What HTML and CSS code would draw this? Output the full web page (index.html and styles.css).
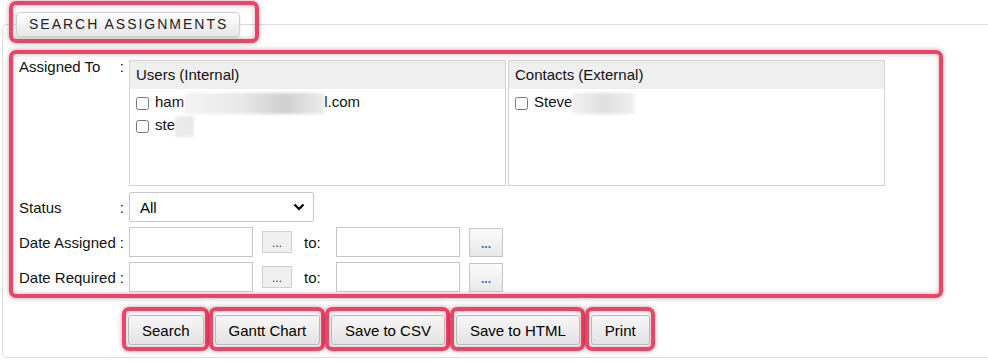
FILE: index.html
```html
<!DOCTYPE html>
<html>
<head>
  <meta charset="UTF-8">
  <title>Search Assignments</title>
  <link rel="stylesheet" href="styles.css">
</head>
<body>
  <div class="panel">
    <div class="mark legend-mark">
      <div class="legend">Search Assignments</div>
    </div>

    <div class="mark form">
      <div class="label top">Assigned To <span>:</span></div>
      <div class="lists">
        <div class="list">
          <div class="list-head">Users (Internal)</div>
          <div class="items">
            <label class="item"><input type="checkbox"><span>ham<span class="blur long"></span>l.com</span></label>
            <label class="item"><input type="checkbox"><span>ste<span class="blur short"></span></span></label>
          </div>
        </div>
        <div class="list">
          <div class="list-head">Contacts (External)</div>
          <div class="items">
            <label class="item"><input type="checkbox"><span>Steve<span class="blur mid"></span></span></label>
          </div>
        </div>
      </div>

      <div class="label">Status <span>:</span></div>
      <div class="select-wrap">
        <select>
          <option>All</option>
          <option>Open</option>
          <option>Closed</option>
        </select>
        <svg class="chevron" width="12" height="8" viewBox="0 0 12 8"><path d="M1.5 1.5 L6 6 L10.5 1.5" fill="none" stroke="#000" stroke-width="2.2"/></svg>
      </div>

      <div class="label">Date Assigned <span>:</span></div>
      <div class="dates">
        <input class="date" type="text">
        <button class="pick">...</button>
        <span class="to">to:</span>
        <input class="date second" type="text">
        <button class="pick alt">...</button>
      </div>

      <div class="label">Date Required <span>:</span></div>
      <div class="dates">
        <input class="date" type="text">
        <button class="pick">...</button>
        <span class="to">to:</span>
        <input class="date second" type="text">
        <button class="pick alt">...</button>
      </div>
    </div>

    <div class="actions">
      <div class="mark act"><button class="btn">Search</button></div>
      <div class="mark act"><button class="btn">Gantt Chart</button></div>
      <div class="mark act"><button class="btn">Save to CSV</button></div>
      <div class="mark act"><button class="btn">Save to HTML</button></div>
      <div class="mark act"><button class="btn">Print</button></div>
    </div>
  </div>
</body>
</html>
```

FILE: styles.css
```css
body {
  margin: 0;
  font-family: "Liberation Sans", Arial, sans-serif;
  font-size: 15px;
  color: #111;
  background-color: #fff;
  overflow: hidden;
}
.panel {
  margin: 24px -20px 0 2px;
  border: 1px solid #dcdcdc;
  border-radius: 5px;
  padding: 0 0 6px 6px;
}
/* red highlight boxes */
.mark {
  border: 4px solid #ee4266;
  border-radius: 7px;
  box-shadow: 0 0 5px rgba(0,0,0,0.35), inset 0 0 5px rgba(0,0,0,0.3);
}
.legend-mark {
  width: fit-content;
  margin-top: -24px;
  padding: 7px 15px 2px 3px;
}
.legend {
  height: 25px;
  box-sizing: border-box;
  border: 1px solid #cfcfcf;
  border-radius: 4px;
  background: linear-gradient(#ffffff, #e6e6e6);
  box-shadow: 0 1px 2px rgba(0,0,0,0.15);
  padding: 0 11px 0 12px;
  line-height: 23px;
  font-size: 14px;
  letter-spacing: 2px;
  text-transform: uppercase;
  color: #222;
}
.form {
  margin-top: 7px;
  width: 934px;
  box-sizing: border-box;
  padding: 6px 6px 2px 6px;
  display: grid;
  grid-template-columns: 110px auto;
  row-gap: 5px;
}
.label {
  display: flex;
  justify-content: space-between;
  padding-right: 5px;
  align-self: center;
  line-height: 17px;
}
.label.top {
  align-self: start;
  margin-top: -2px;
}
.lists {
  display: flex;
  gap: 2px;
  margin-bottom: 1px;
}
.list {
  width: 377px;
  height: 126px;
  box-sizing: border-box;
  border: 1px solid #d3d3d3;
}
.list-head {
  background-color: #efefef;
  height: 28px;
  line-height: 28px;
  padding-left: 6px;
}
.items {
  padding-top: 3px;
}
.item {
  display: flex;
  align-items: center;
  height: 23px;
  padding-left: 6px;
  gap: 6px;
}
.item input {
  margin: 0;
  width: 13px;
  height: 13px;
}
.blur {
  display: inline-block;
  vertical-align: middle;
  height: 21px;
  background: linear-gradient(90deg, #f4f4f4, #e8e8e8 40%, #cfcfcf 72%, #ebebeb);
  filter: blur(1.5px);
}
.blur.long { width: 140px; }
.blur.short { width: 19px; background: #e9e9e9; }
.blur.mid { width: 63px; background: linear-gradient(90deg, #f2f2f2, #dedede 50%, #f0f0f0); }
.select-wrap {
  position: relative;
  width: 185px;
  height: 30px;
}
.select-wrap select {
  appearance: none;
  width: 100%;
  height: 30px;
  border: 1px solid #c6c6c6;
  border-radius: 2px;
  background-color: #fff;
  padding-left: 10px;
  font-family: inherit;
  font-size: 15px;
  color: #000;
}
.chevron {
  position: absolute;
  right: 9px;
  top: 11px;
  pointer-events: none;
}
.dates {
  display: flex;
  align-items: center;
  height: 30px;
}
.date {
  width: 124px;
  height: 30px;
  box-sizing: border-box;
  border: 1px solid #c6c6c6;
  margin: 0;
}
.pick {
  margin-left: 9px;
  width: 30px;
  height: 22px;
  border: 1px solid #cfcfcf;
  background-color: #efefef;
  font-size: 12px;
  color: #444;
  padding: 0 0 2px;
  display: flex;
  align-items: flex-end;
  justify-content: center;
}
.pick.alt {
  margin-left: 9px;
  width: 34px;
  height: 29px;
  border: 1px solid #c4c4c4;
  background: linear-gradient(#fbfbfb, #e8e8e8);
  color: #2c6fb0;
  font-weight: bold;
  padding-bottom: 5px;
}
.to {
  margin-left: 12px;
  width: 32px;
}
.actions {
  display: flex;
  margin-top: 9px;
  padding-left: 113px;
}
.act {
  padding: 4px 1px 2px 2px;
}
.btn {
  height: 30px;
  padding: 0 13px;
  border: 1px solid #b9b9b9;
  border-radius: 3px;
  background: linear-gradient(#f7f7f7, #e2e2e2);
  font-family: inherit;
  font-size: 15px;
  color: #000;
}
```
